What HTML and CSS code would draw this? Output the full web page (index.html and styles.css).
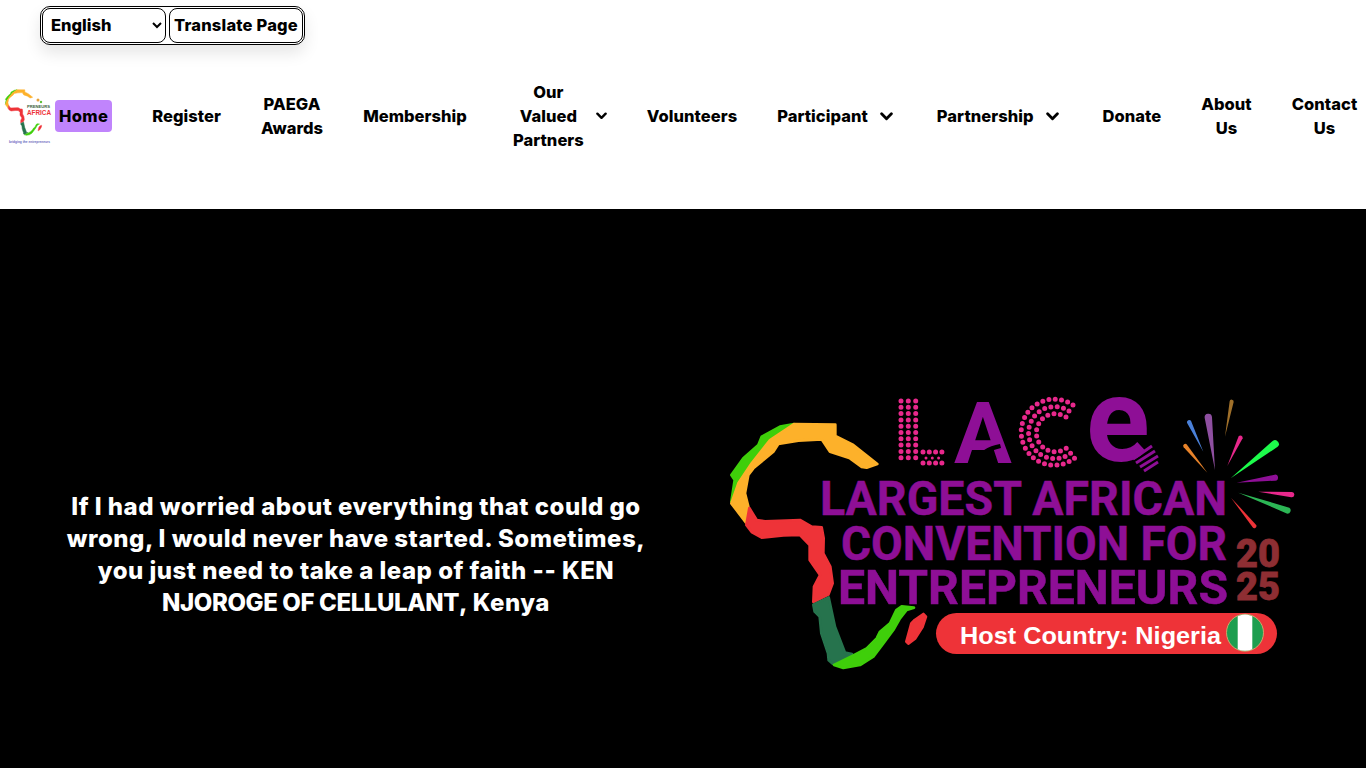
FILE: index.html
```html
<!DOCTYPE html>
<html lang="en">

<head>
    <meta charset="UTF-8">
    <title>Prenuers Africa</title>
    <link rel="stylesheet" href="styles.css">
</head>

<body>
    <svg class="defs" width="0" height="0">
        <defs>
            <symbol id="africa" viewBox="20 90 610 755">
                <g class="africa-shape">
                    <path fill="#3fcf0a" stroke="#3fcf0a" d="M222 102L180 110L125 140L115 165L70 205L34 255L44 270L34 335L55 280L95 220L150 150Z" />
                    <path fill="#fdb12a" stroke="#fdb12a" d="M222 102L346 104L346 138L400 165L472 222L440 233L425 231L390 205L330 185L305 148L235 152L175 162L160 185L130 210L100 235L85 255L75 310L85 350L78 398L34 340L55 280L95 220L150 150Z" />
                    <path fill="#ee3338" stroke="#ee3338" d="M88 354L110 390L135 394L200 392L240 390L275 410L305 412L311 445L310 490L331 530L338 580L325 614L280 636L282 590L300 555L269 510L269 465L240 435L190 436L125 443L95 426L79 405Z" />
                    <path fill="#26734d" stroke="#26734d" d="M280 644L326 622L345 710L375 788L396 792L338 821L326 811L324 790L304 730L299 680L284 665Z" />
                    <path fill="#3fcf0a" stroke="#3fcf0a" d="M342 825L400 796L440 775L470 745L480 725L510 700L529 660L545 649L582 653L560 660L540 685L520 720L490 760L460 800L420 825L370 834Z" />
                    <path fill="#ee3338" stroke="#ee3338" d="M610 672L618 680L608 710L585 746L565 761L559 755L574 700L584 690Z" />
                </g>
            </symbol>
        </defs>
    </svg>

    <header class="site-header">
        <div class="translate-box">
            <select class="lang-select">
                <option>English</option>
                <option>French</option>
            </select>
            <button type="button" class="translate-btn">Translate Page</button>
        </div>

        <nav class="main-nav">
            <svg class="logo" viewBox="0 0 49 57">
                <use href="#africa" x="1" y="1" width="39" height="47" />
                <circle cx="35" cy="12" r="1.500" fill="#e6a23c" />
                <circle cx="38" cy="14" r="1.200" fill="#5fbf3a" />
                <text class="logo-dark" x="24" y="20" textLength="23" lengthAdjust="spacingAndGlyphs">PRENEURS</text>
                <text class="logo-red" x="24" y="27" textLength="24" lengthAdjust="spacingAndGlyphs">AFRICA</text>
                <text class="logo-tag" x="6" y="55" textLength="41" lengthAdjust="spacingAndGlyphs">bridging the entrepreneurs</text>
            </svg>
            <a class="nav-link active" href="#">Home</a>
            <a class="nav-link" href="#">Register</a>
            <a class="nav-link" href="#">PAEGA<br>Awards</a>
            <a class="nav-link" href="#">Membership</a>
            <a class="nav-link dropdown small" href="#">
                <span>Our<br>Valued<br>Partners</span>
                <svg class="chevron" viewBox="0 0 12 8"><path d="M1.500 1.500L6 6L10.500 1.500" /></svg>
            </a>
            <a class="nav-link" href="#">Volunteers</a>
            <a class="nav-link dropdown" href="#">
                <span>Participant</span>
                <svg class="chevron" viewBox="0 0 12 8"><path d="M1.500 1.500L6 6L10.500 1.500" /></svg>
            </a>
            <a class="nav-link dropdown" href="#">
                <span>Partnership</span>
                <svg class="chevron" viewBox="0 0 12 8"><path d="M1.500 1.500L6 6L10.500 1.500" /></svg>
            </a>
            <a class="nav-link" href="#">Donate</a>
            <a class="nav-link" href="#">About<br>Us</a>
            <a class="nav-link" href="#">Contact<br>Us</a>
        </nav>
    </header>

    <section class="hero">
        <p class="hero-quote">If I had worried about everything that could go wrong, I would never have started. Sometimes, you just need to take a leap of faith -- KEN <span class="caps">NJOROGE OF CELLULANT</span>, Kenya</p>

        <svg class="hero-logo" viewBox="720 390 580 290">
            <use href="#africa" x="726.670" y="420" width="203.330" height="251.670" />

            <!-- dotted L -->
            <g class="dots">
                <path d="M901 401V464M908.300 401V464M915.700 401V464M923 463H942M923 452H942" />
                <path class="dots-fine" d="M926 458H942" />
            </g>
            <text class="lace" x="954" y="463">A</text>
            <path class="swoosh" d="M972 463C978 452 988 446 1000 444L1001 448C991 450 984 455 978 463Z" />

            <!-- dotted C -->
            <g class="dots">
                <path d="M1073 405A33 33 0 1 0 1077 456" />
                <path d="M1069 411A26 26 0 1 0 1073 451" />
                <path d="M1066 417A19 19 0 1 0 1069 446" />
            </g>

            <!-- bulb e -->
            <text class="lace lace-e" x="1086" y="461">e</text>
            <path class="bulb" d="M1133 459L1152 446M1136 463L1155 451M1140 467L1158 456M1144 471L1158 462" />

            <g transform="translate(1010 390) scale(.3333)">
                <path fill="#a0702a" d="M645 140L671 36A6 6 0 0 0 659 34Z" />
                <path fill="#8e4fa0" d="M615 240L606 81A11 11 0 0 0 584 83Z" />
                <path fill="#4a80d8" d="M580 185L543 92A7 7 0 0 0 531 98Z" />
                <path fill="#e8832a" d="M592 248L531 164A6 6 0 0 0 521 172Z" />
                <path fill="#e8288c" d="M652 228L698 145A7 7 0 0 0 686 139Z" />
                <path fill="#1dfb4b" d="M662 265L802 171A11 11 0 0 0 788 153Z" />
                <path fill="#8e0f96" d="M680 278L796 272A9 9 0 0 0 794 254Z" />
                <path fill="#e8288c" d="M745 305L844 322A8 8 0 0 0 846 306Z" />
                <path fill="#2cb655" d="M685 308L832 371A10 10 0 0 0 838 353Z" />
                <path fill="#ee3338" d="M663 323L728 412A6 6 0 0 0 738 404Z" />
            </g>

            <text class="slogan" x="820" y="515" textLength="407" lengthAdjust="spacingAndGlyphs">LARGEST AFRICAN</text>
            <text class="slogan" x="841" y="560" textLength="386" lengthAdjust="spacingAndGlyphs">CONVENTION FOR</text>
            <text class="slogan" x="838" y="604" textLength="390" lengthAdjust="spacingAndGlyphs">ENTREPRENEURS</text>
            <text class="year" x="1236" y="567" textLength="44" lengthAdjust="spacingAndGlyphs">20</text>
            <text class="year" x="1236" y="600" textLength="44" lengthAdjust="spacingAndGlyphs">25</text>

            <rect x="936" y="613" width="341" height="41" rx="20.500" fill="#ee3338" />
            <text class="host" x="960" y="644" textLength="261" lengthAdjust="spacingAndGlyphs">Host Country: Nigeria</text>
            <circle cx="1245" cy="632.700" r="18.500" fill="#1e9e50" stroke="#c9a86a" />
            <path fill="#fff" d="M1237.700 616.200A18 18 0 0 1 1252.300 616.200V649.200A18 18 0 0 1 1237.700 649.200Z" />
        </svg>
    </section>
</body>

</html>
```

FILE: styles.css
```css
* {
    box-sizing: border-box;
}

html,
body {
    height: 100%;
}

body {
    margin: 0;
    display: flex;
    flex-direction: column;
    overflow: hidden;
    font-family: "Inter", "DejaVu Sans", sans-serif;
    color: #000;
    background: #fff;
}

.defs {
    display: block;
    height: 0;
}

.site-header {
    height: 209px;
    flex: none;
}

.translate-box {
    display: inline-flex;
    gap: 3px;
    margin: 6px 0 0 40px;
    padding: 1px;
    border: 1px solid #000;
    border-radius: 10px;
    background: #fff;
    box-shadow: 0 8px 16px rgba(0, 0, 0, 0.1);
}

.lang-select,
.translate-btn {
    height: 35px;
    padding-bottom: 2px;
    border: 1px solid #000;
    border-radius: 8px;
    background: #fff;
    color: #000;
    font-family: inherit;
    font-size: 16.5px;
    font-weight: 800;
}

.lang-select {
    width: 124px;
    padding-left: 4px;
}

.translate-btn {
    width: 134px;
    padding-left: 0;
    padding-right: 0;
    letter-spacing: 0.2px;
}

.main-nav {
    display: flex;
    align-items: center;
    gap: 40px;
    height: 114px;
    margin-top: 14px;
    padding-left: 3px;
    white-space: nowrap;
}

.logo {
    width: 49px;
    height: 57px;
    flex: none;
    margin-right: -37px;
}

.africa-shape {
    stroke-width: 8;
    stroke-linejoin: round;
}

.logo text {
    font-family: "Liberation Sans", sans-serif;
    font-weight: 700;
}

.logo-dark {
    font-size: 4.400px;
    fill: #3c5f3c;
}

.logo-red {
    font-size: 6.500px;
    fill: #ee3338;
}

.logo-tag {
    font-size: 3px;
    fill: #6a6ac0;
}

.nav-link {
    color: #000;
    font-size: 16.5px;
    font-weight: 800;
    line-height: 24px;
    letter-spacing: 0.05px;
    text-align: center;
    text-decoration: none;
}

.nav-link.active {
    padding: 4px;
    border-radius: 4px;
    background: #c084fc;
    letter-spacing: 0.35px;
}

.dropdown {
    display: flex;
    align-items: center;
    gap: 12px;
    padding-right: 4px;
}

.dropdown.small {
    margin-left: 6px;
    padding-right: 0;
}

.chevron {
    width: 13px;
    height: 9px;
    fill: none;
    stroke: #000;
    stroke-width: 2.6;
    stroke-linecap: round;
    stroke-linejoin: round;
}

.dropdown.small .chevron {
    width: 11px;
    height: 8px;
}

.hero {
    flex: 1;
    display: flex;
    justify-content: space-between;
    align-items: flex-start;
    background: #000;
    padding-top: 181px;
}

.hero-quote {
    width: 600px;
    margin: 101px 0 0 56px;
    color: #fff;
    font-size: 24px;
    font-weight: 800;
    line-height: 32px;
    letter-spacing: 0.5px;
    text-align: center;
}

.caps {
    letter-spacing: -0.4px;
}

.hero-logo {
    width: 580px;
    height: 290px;
    margin-right: 66px;
}

.dots {
    fill: none;
    stroke: #e8288c;
    stroke-width: 5;
    stroke-linecap: round;
    stroke-dasharray: 0 6.3;
}

.dots-fine {
    stroke-width: 3;
}

.lace {
    font-family: "Roboto", sans-serif;
    font-size: 86px;
    font-weight: 700;
    fill: #8e0f96;
}

.lace-e {
    font-size: 118px;
}

.swoosh {
    fill: #000;
}

.bulb {
    fill: none;
    stroke: #8e0f96;
    stroke-width: 3;
}

.slogan {
    font-family: "Roboto", sans-serif;
    font-size: 48px;
    font-weight: 700;
    fill: #8e0f96;
    stroke: #8e0f96;
    stroke-width: 0.5;
}

.year {
    font-family: "Roboto", sans-serif;
    font-size: 39px;
    font-weight: 900;
    fill: #8e2e33;
    stroke: #8e2e33;
    stroke-width: 0.8;
}

.host {
    font-family: "Liberation Sans", sans-serif;
    font-size: 23px;
    font-weight: 700;
    fill: #fff;
}
```
